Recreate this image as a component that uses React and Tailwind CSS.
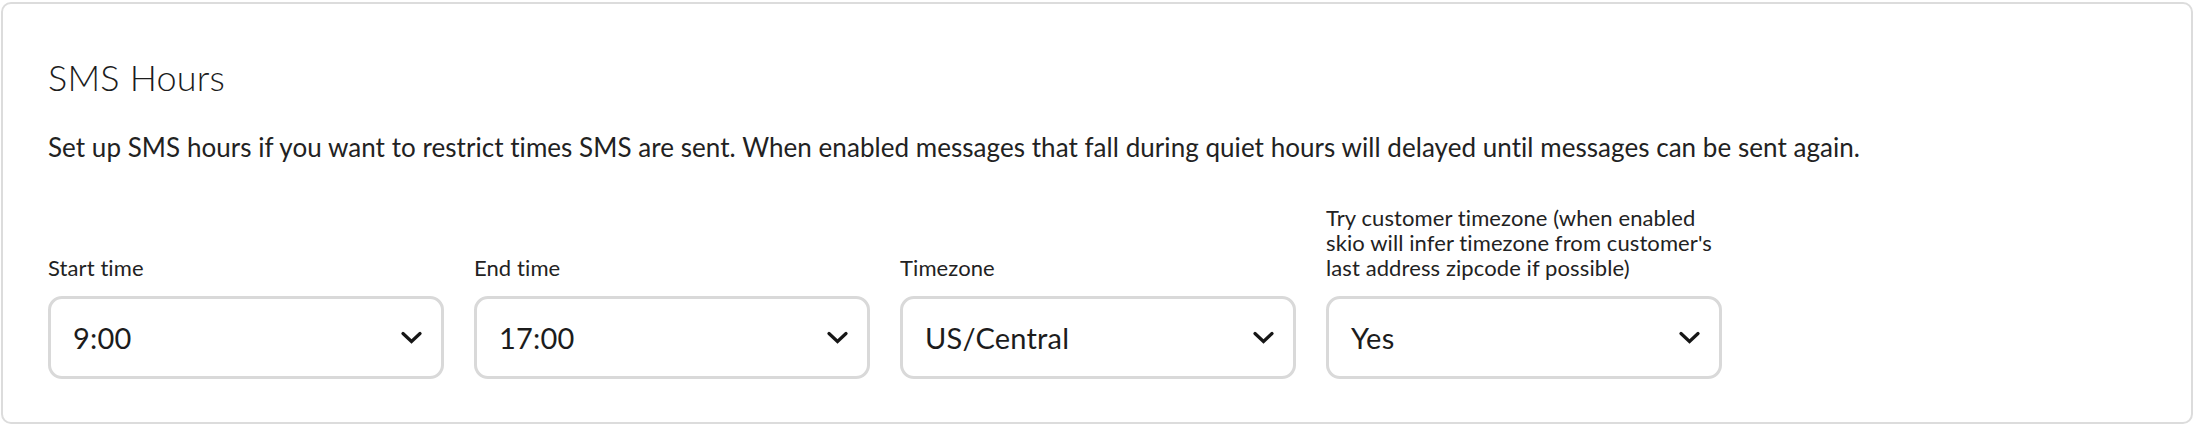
const fields = [
  { label: "Start time", value: "9:00" },
  { label: "End time", value: "17:00" },
  { label: "Timezone", value: "US/Central" },
  {
    label:
      "Try customer timezone (when enabled skio will infer timezone from customer's last address zipcode if possible)",
    value: "Yes",
  },
];

const Chevron = () => (
  <svg width="21" height="13" viewBox="0 0 21 13" fill="none" className="shrink-0">
    <path d="M2 2.5 L10.5 10.5 L19 2.5" stroke="#161616" strokeWidth="3.2" strokeLinecap="round" strokeLinejoin="miter" />
  </svg>
);

export default function App() {
  return (
    <div className="w-[2194px] h-[426px] bg-white p-[1px] pt-[2px] font-['Lato',sans-serif] text-[#1c1c1c]">
      <div className="h-[422px] rounded-[10px] border-2 border-[#dcdcdc] pl-[45px] pt-[52px]">
        <h1 className="text-[36px] leading-[1.2] font-light tracking-[0.2px]">SMS Hours</h1>
        <p className="mt-[33px] text-[26px] leading-[30px] tracking-[0.05px] text-[#222]">
          Set up SMS hours if you want to restrict times SMS are sent. When enabled messages that fall during quiet hours will delayed until messages can be sent again.
        </p>

        <div className="mt-[43px] flex items-end gap-[30px]">
          {fields.map((f) => (
            <div key={f.label} className="w-[396px] flex flex-col">
              <label className="text-[22px] leading-[25px] tracking-[0.1px] text-[#222]">{f.label}</label>
              <div className="mt-[16px] h-[83px] rounded-[14px] border-[3px] border-[#d9d9d9] flex items-center justify-between pl-[22px] pr-[19px]">
                <span className="text-[29px] leading-none tracking-[0.2px]">{f.value}</span>
                <Chevron />
              </div>
            </div>
          ))}
        </div>
      </div>
    </div>
  );
}
